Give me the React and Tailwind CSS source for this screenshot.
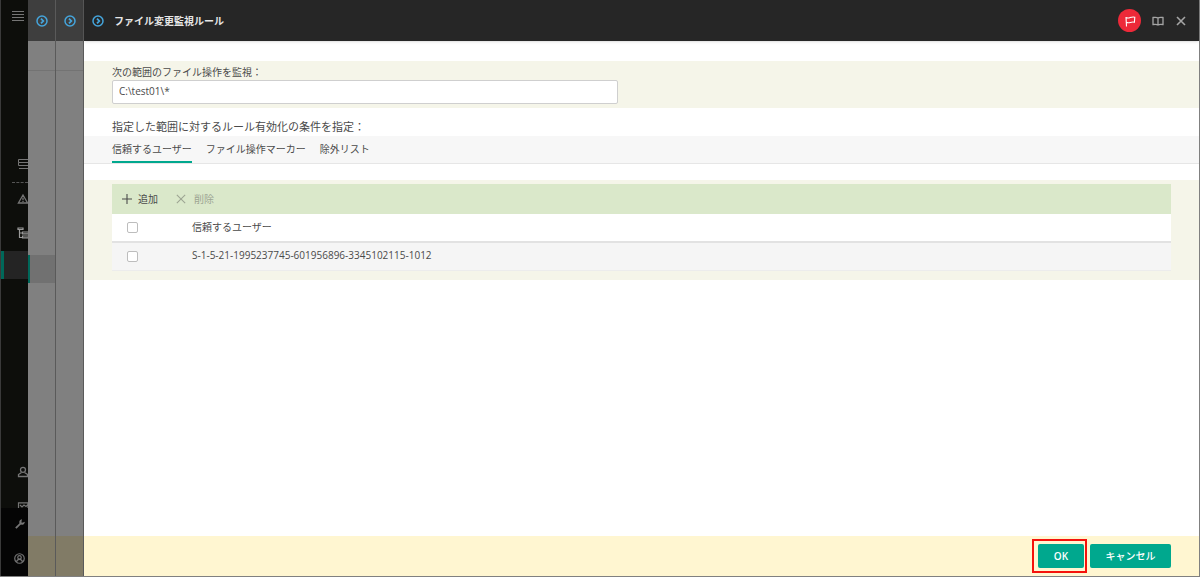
import { useState } from 'react';

const tabs = ['信頼するユーザー', 'ファイル操作マーカー', '除外リスト'];

const users = ['S-1-5-21-1995237745-601956896-3345102115-1012'];

function Icon({ className = '', children, ...props }) {
  return (
    <svg viewBox="0 0 12 12" fill="none" stroke="currentColor" className={`shrink-0 ${className}`} aria-hidden="true" {...props}>
      {children}
    </svg>
  );
}

function ArrowIcon() {
  return (
    <Icon className="size-3 text-[#45a5dc]" strokeWidth="1.5">
      <circle cx="6" cy="6" r="5" />
      <path d="M5 3.6 7.3 6 5 8.4" strokeWidth="1.8" />
    </Icon>
  );
}

function Sidebar() {
  return (
    <nav className="flex w-7 shrink-0 flex-col overflow-hidden border-l border-[#3a3a3a] bg-[#0d0e0b] text-[#757575]">
      <button type="button" aria-label="メニュー" className="flex h-8 shrink-0 items-center pl-[11px]">
        <Icon className="size-3" strokeWidth="1">
          <path d="M0 1.5h12M0 4.5h12M0 7.5h12M0 10.5h12" />
        </Icon>
      </button>

      <div className="mt-29 flex shrink-0 flex-col">
        <a href="#servers" aria-label="サーバー" className="flex h-8 items-center pl-4">
          <Icon className="size-3" strokeWidth="1">
            <path d="M1.5 1.5h10v3h-10zM1.5 4.5v3h10v-3M2 10.5h9" />
          </Icon>
        </a>
        <div className="ml-[11px] mt-0.5 border-t border-dashed border-[#555]" />
        <a href="#alerts" aria-label="警告" className="flex h-8 items-center pl-4">
          <Icon className="size-3" strokeWidth="1.3">
            <path d="M6 2 10.6 10H1.4zM6 4.8v2.4M6 8v1" />
          </Icon>
        </a>
        <a href="#devices" aria-label="デバイス" className="flex h-9 items-center pl-4 text-[#9a9a9a]">
          <Icon className="size-3" strokeWidth="1.2">
            <path d="M1 1h5v1.5H1zM2.5 3v7.5H5M2.5 6H5M5.5 5h6v1.8h-6zM5.5 9h6v1.8h-6z" />
          </Icon>
        </a>
        <a href="#policies" aria-label="ポリシー" className="block h-7 border-l-3 border-[#00685a] bg-[#242424]" />
      </div>

      <div className="mt-auto flex shrink-0 flex-col">
        <a href="#users" aria-label="ユーザー" className="flex h-8 items-center pl-4">
          <Icon className="size-3" strokeWidth="1.3">
            <circle cx="6" cy="3.8" r="2.5" />
            <path d="M4.5 6.5 1.5 8.5v2h9v-2l-3-2" />
          </Icon>
        </a>
        <a href="#reports" aria-label="レポート" className="mt-1 flex h-4 items-end overflow-hidden pl-4">
          <Icon className="h-1.5 w-3" viewBox="0 0 12 6" strokeWidth="1.2">
            <path d="M1.5 7V.8H11V7M3 3l2 2 2-2 2 1.500 2-2" />
          </Icon>
        </a>
        <div className="bg-[#050505]">
          <a href="#settings" aria-label="設定" className="flex h-8 items-center pl-3.5">
            <Icon className="size-2.5">
              <path d="M1 11 6.5 5.5" strokeWidth="2.2" />
              <path d="M7.5 1.2a2.6 2.6 0 1 0 3.3 3.3L8.8 5.2 7 4.5z" strokeWidth="1.3" />
            </Icon>
          </a>
          <a href="#account" aria-label="アカウント" className="flex h-9 items-center pl-[13px]">
            <Icon className="size-[11px]" strokeWidth="1.3">
              <circle cx="6" cy="6" r="5.2" />
              <circle cx="6" cy="4.8" r="1.9" />
              <path d="M2.8 9.6c.5-2 1.6-2.6 3.2-2.6s2.7.6 3.2 2.6" />
            </Icon>
          </a>
        </div>
      </div>
    </nav>
  );
}

function CollapsedPanel({ active }) {
  return (
    <div className="flex w-7 shrink-0 flex-col border-r border-[#5a5a5a] bg-[#808080]">
      <button type="button" aria-label="展開" className="flex h-[41px] shrink-0 items-center justify-end bg-[#3e3e3e] pr-[7px]">
        <ArrowIcon />
      </button>
      <div className="h-[30px] shrink-0 border-b border-[#737373]" />
      {active && <div className="mt-46 h-7 shrink-0 border-l-2 border-[#00685a] bg-[#717171]" />}
      <div className="mt-auto h-10 shrink-0 bg-[#817b66]" />
    </div>
  );
}

function PanelHeader() {
  return (
    <header className="flex h-[41px] shrink-0 items-center bg-[#262626] pr-3 pl-2 shadow-sm">
      <ArrowIcon />
      <h1 className="ml-2.5 text-[10px] font-bold text-[#e6e6e6]">ファイル変更監視ルール</h1>
      <div className="ml-auto flex items-center gap-[11px] text-[#a5a5a5]">
        <button type="button" aria-label="通知" className="flex size-[23px] items-center justify-center rounded-full bg-[#ed2939] text-white">
          <Icon className="size-3" strokeWidth="1.1">
            <path d="M2.5 11.5 2 2M2 2.5c1.500 1 2.500.6 4 .1s2.800-.9 4.800-.4l-.4 5c-2-.5-3-.1-4.200.3s-2.400.6-3.900-.2" />
          </Icon>
        </button>
        <button type="button" aria-label="ヘルプ">
          <Icon className="size-3" strokeWidth="1.3">
            <path d="M6 3C5 2.2 3 2.2 1 2.500v7c2-.3 4-.3 5 .5 1-.8 3-.8 5-.5v-7C9 2.200 7 2.200 6 3zM6 3v7" />
          </Icon>
        </button>
        <button type="button" aria-label="閉じる">
          <Icon className="size-3" strokeWidth="1.6">
            <path d="M2 2l8 8M10 2l-8 8" />
          </Icon>
        </button>
      </div>
    </header>
  );
}

function Checkbox({ label, checked, onChange }) {
  return (
    <input
      type="checkbox"
      aria-label={label}
      checked={checked}
      onChange={onChange}
      className="block size-[11px] appearance-none rounded-xs border border-[#bdbdbd] bg-white checked:bg-[#00a88e]"
    />
  );
}

export default function App() {
  const [scope, setScope] = useState('C:\\test01\\*');
  const [activeTab, setActiveTab] = useState(tabs[0]);
  const [selected, setSelected] = useState([]);

  const toggle = (user) => {
    setSelected((prev) => (prev.includes(user) ? prev.filter((u) => u !== user) : [...prev, user]));
  };

  const toggleAll = () => {
    setSelected((prev) => (prev.length === users.length ? [] : users));
  };

  return (
    <div className="flex h-screen border-r border-b border-[#808080] bg-white font-['Open_Sans','Noto_Sans_CJK_JP',sans-serif] text-[10px] leading-4 text-[#4a4a4a]">
      <Sidebar />
      <CollapsedPanel active />
      <CollapsedPanel />

      <main className="flex min-w-0 flex-1 flex-col">
        <PanelHeader />

        <div className="flex-1 overflow-auto pt-5">
          <section className="bg-[#f5f5e9] px-7 pt-[3px] pb-1">
            <label htmlFor="scope" className="block">次の範囲のファイル操作を監視：</label>
            <input
              id="scope"
              type="text"
              value={scope}
              onChange={(e) => setScope(e.target.value)}
              className="block h-6 w-full max-w-[506px] rounded-xs border border-[#cfcfcf] bg-white px-1.5 pb-0.5 text-[10px] outline-none"
            />
          </section>

          <p className="mt-[11px] mb-px px-7 text-[11px]">指定した範囲に対するルール有効化の条件を指定：</p>
          <div role="tablist" className="flex h-7 gap-3.5 border-b border-[#e6e6e6] bg-[#f7f7f7] px-7">
            {tabs.map((tab) => (
              <button
                key={tab}
                type="button"
                role="tab"
                aria-selected={tab === activeTab}
                onClick={() => setActiveTab(tab)}
                className={tab === activeTab ? 'border-b-2 border-[#00a88e]' : 'border-b-2 border-transparent'}
              >
                {tab}
              </button>
            ))}
          </div>

          <section className="mt-4 bg-[#f5f5e9] px-7 pt-1 pb-[9px]">
            <div className="flex h-[30px] items-center gap-[18px] bg-[#dae8ca] px-2.5">
              <button type="button" className="flex items-center gap-1.5">
                <Icon className="size-2.5" strokeWidth="1.3">
                  <path d="M6 0v12M0 6h12" />
                </Icon>
                追加
              </button>
              <button type="button" disabled={selected.length === 0} className="flex items-center gap-2 disabled:text-[#9da593]">
                <Icon className="size-2.5" strokeWidth="1.3">
                  <path d="M1 1l10 10M11 1 1 11" />
                </Icon>
                削除
              </button>
            </div>
            <table className="w-full table-fixed border-collapse text-left">
              <thead>
                <tr className="h-7 border-b-2 border-[#e2e2e2] bg-white">
                  <th className="w-20 px-[15px] font-normal">
                    <Checkbox label="すべて選択" checked={selected.length === users.length} onChange={toggleAll} />
                  </th>
                  <th className="pb-0.5 font-normal">信頼するユーザー</th>
                </tr>
              </thead>
              <tbody>
                {users.map((user) => (
                  <tr key={user} className="h-7 border-b border-[#ececec] bg-[#f5f5f5]">
                    <td className="px-[15px]">
                      <Checkbox label={user} checked={selected.includes(user)} onChange={() => toggle(user)} />
                    </td>
                    <td className="pb-0.5">{user}</td>
                  </tr>
                ))}
              </tbody>
            </table>
          </section>
        </div>

        <footer className="flex h-10 shrink-0 items-center justify-end bg-[#fff6d1] px-7 text-white">
          <div className="mr-[3px] border-2 border-[#f5120c] py-[3px] pr-px pl-1">
            <button type="button" className="block h-6 w-[46px] rounded-xs bg-[#00a88e] font-semibold">OK</button>
          </div>
          <button type="button" className="h-6 w-[81px] rounded-xs bg-[#00a88e] font-medium">キャンセル</button>
        </footer>
      </main>
    </div>
  );
}
